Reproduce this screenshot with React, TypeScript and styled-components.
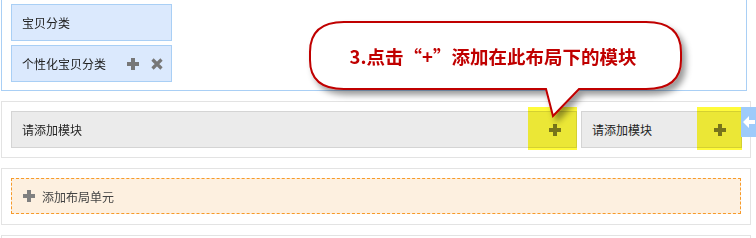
import React from 'react';
import styled, { createGlobalStyle } from 'styled-components';

const GlobalStyle = createGlobalStyle`
    html, body {
        margin: 0;
        padding: 0;
        background: #fff;
    }
    body {
        font-family: "Noto Sans CJK SC", "Liberation Sans", sans-serif;
        font-size: 12px;
        color: #333;
    }
`;

const Page = styled.div`
    position: relative;
    width: 756px;
    height: 238px;
    overflow: hidden;
    padding-left: 1px;
    box-sizing: border-box;
`;

const CategoryPanel = styled.div`
    width: 746px;
    height: 91px;
    box-sizing: border-box;
    border: 1px solid #a9cff5;
    border-top: none;
    padding: 4px 0 0 9px;
    display: flex;
    flex-direction: column;
    gap: 4px;
`;

const CategoryItem = styled.div`
    width: 161px;
    height: 37px;
    box-sizing: border-box;
    border: 1px solid #a9cff5;
    background: #dbe9fd;
    display: flex;
    align-items: center;
    padding: 0 8px 0 10px;
    color: #222;
`;

const ItemLabel = styled.span`
    flex: 1;
`;

const IconGroup = styled.div`
    display: flex;
    align-items: center;
    gap: 12px;
`;

const Panel = styled.div`
    width: 750px;
    height: 57px;
    box-sizing: border-box;
    margin-top: 10px;
    border: 1px solid #e3e3e3;
    padding: 9px 8px 9px 9px;
    display: flex;
    gap: 4px;
`;

const ModuleBox = styled.div<{ $width?: number }>`
    position: relative;
    ${({ $width }) => ($width ? `width: ${$width}px;` : 'flex: 1;')}
    height: 37px;
    box-sizing: border-box;
    border: 1px solid #d4d4d4;
    background: #ebebeb;
    display: flex;
    align-items: center;
    padding: 0 15px 0 10px;
    color: #222;
`;

const Highlight = styled.div<{ $width: number }>`
    position: absolute;
    right: -1px;
    top: -5px;
    width: ${({ $width }) => $width}px;
    height: 43px;
    background: #fffb3a;
    mix-blend-mode: multiply;
    pointer-events: none;
`;

const SideTab = styled.div`
    position: absolute;
    left: 100%;
    top: -5px;
    width: 20px;
    height: 30px;
    background: #9ecbfa;
    display: flex;
    align-items: center;
    padding-left: 2px;
    box-sizing: border-box;
`;

const AddUnit = styled.div`
    flex: 1;
    height: 36px;
    box-sizing: border-box;
    border: 1px dashed #f79a2a;
    background: #fdf0e0;
    display: flex;
    align-items: center;
    gap: 7px;
    padding-left: 11px;
    color: #444;
    margin-right: 1px;
`;

const LastPanel = styled.div`
    width: 750px;
    height: 20px;
    box-sizing: border-box;
    margin-top: 10px;
    border: 1px solid #e3e3e3;
`;

const Callout = styled.div`
    position: absolute;
    left: 300px;
    top: 10px;
    width: 400px;
    height: 120px;
    pointer-events: none;
`;

const CalloutShape = styled.svg`
    position: absolute;
    inset: 0;
`;

const CalloutText = styled.div`
    position: absolute;
    left: 8px;
    top: 14px;
    width: 370px;
    height: 64px;
    display: flex;
    align-items: center;
    justify-content: center;
    font-size: 18.5px;
    font-weight: bold;
    color: #c00000;
`;

const PlusIcon: React.FC<{ color?: string }> = ({ color = '#777' }) => (
    <svg width="12" height="12" viewBox="0 0 12 12">
        <rect x="4" y="0" width="4" height="12" fill={color} />
        <rect x="0" y="4" width="12" height="4" fill={color} />
    </svg>
);

const CrossIcon: React.FC = () => (
    <svg width="12" height="12" viewBox="0 0 12 12">
        <path d="M1.5 1.5 L10.5 10.5 M10.5 1.5 L1.5 10.5" stroke="#777" strokeWidth="3.2" />
    </svg>
);

export default function App() {
    return (
        <>
            <GlobalStyle />
            <Page>
                <CategoryPanel>
                    <CategoryItem>
                        <ItemLabel>宝贝分类</ItemLabel>
                    </CategoryItem>
                    <CategoryItem>
                        <ItemLabel>个性化宝贝分类</ItemLabel>
                        <IconGroup>
                            <PlusIcon />
                            <CrossIcon />
                        </IconGroup>
                    </CategoryItem>
                </CategoryPanel>

                <Panel>
                    <ModuleBox>
                        <ItemLabel>请添加模块</ItemLabel>
                        <PlusIcon />
                        <Highlight $width={49} />
                    </ModuleBox>
                    <ModuleBox $width={161}>
                        <ItemLabel>请添加模块</ItemLabel>
                        <PlusIcon />
                        <Highlight $width={45} />
                        <SideTab>
                            <svg width="12" height="14" viewBox="0 0 12 14">
                                <path d="M0 7 L6 1 V5 H12 V9 H6 V13 Z" fill="#fff" />
                            </svg>
                        </SideTab>
                    </ModuleBox>
                </Panel>

                <Panel>
                    <AddUnit>
                        <PlusIcon color="#808080" />
                        <span>添加布局单元</span>
                    </AddUnit>
                </Panel>

                <LastPanel />

                <Callout>
                    <CalloutShape width="400" height="120" viewBox="0 0 400 120">
                        <defs>
                            <filter id="shadow" x="-10%" y="-10%" width="130%" height="140%">
                                <feDropShadow dx="4" dy="5" stdDeviation="3" floodColor="#000" floodOpacity="0.4" />
                            </filter>
                        </defs>
                        <path
                            d="M44 12 H346 Q381 12 381 42 V50 Q381 79 346 79 H279 L253 106 L246 79 H44 Q10 79 10 50 V42 Q10 12 44 12 Z"
                            fill="#fff"
                            stroke="#c00000"
                            strokeWidth="2"
                            filter="url(#shadow)"
                        />
                    </CalloutShape>
                    <CalloutText>3.点击“+”添加在此布局下的模块</CalloutText>
                </Callout>
            </Page>
        </>
    );
}
